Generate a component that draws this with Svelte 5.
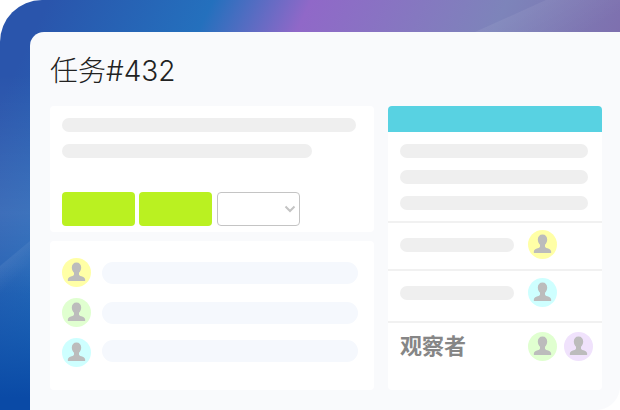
<script>
	const watchers = ['#e0ffd0', '#f0e2fc'];
	const comments = [
		{ tint: '#ffffa6', barTop: 4 },
		{ tint: '#e0ffd0', barTop: 4 },
		{ tint: '#ceffff', barTop: 2 }
	];
</script>

{#snippet avatar(tint)}
	<svg class="avatar" viewBox="0 0 29 29" aria-hidden="true">
		<circle cx="14.5" cy="14.5" r="14.5" fill={tint} />
		<path
			d="M14.5 4.500c-2.900 0-4.700 2-4.700 5 0 2.200 1 4 2.200 5.200v1.800c0 .9-.9 1.300-2.300 1.800-2.200.8-3.800 1.600-3.900 3.400 0 .8.200 1.300.2 1.300h17s.2-.5.200-1.300c-.1-1.800-1.700-2.600-3.900-3.400-1.400-.5-2.300-.9-2.300-1.800v-1.800c1.200-1.200 2.200-3 2.200-5.200 0-3-1.800-5-4.700-5z"
			fill="#bcbcbc"
		/>
	</svg>
{/snippet}

<div class="hero">
	<svg class="sheen" viewBox="0 0 620 410" aria-hidden="true">
		<defs>
			<linearGradient id="fade-left" x1="0" y1="0" x2="0.3" y2="1">
				<stop offset="0" stop-color="#fff" stop-opacity="0.12" />
				<stop offset="0.5" stop-color="#fff" stop-opacity="0" />
			</linearGradient>
			<linearGradient id="fade-right" x1="0" y1="0" x2="1" y2="0.4">
				<stop offset="0" stop-color="#fff" stop-opacity="0.1" />
				<stop offset="1" stop-color="#fff" stop-opacity="0" />
			</linearGradient>
		</defs>
		<path d="M0 266 L30 241 L30 340 L0 340 Z" fill="url(#fade-left)" />
		<path d="M475 32 L546 0 L620 0 L620 32 Z" fill="url(#fade-right)" />
	</svg>
	<main class="card">
		<h1>任务#432</h1>
		<div class="columns">
			<div class="left">
				<section class="panel details">
					<div class="bar long"></div>
					<div class="bar mid"></div>
					<div class="actions">
						<div class="btn"></div>
						<div class="btn"></div>
						<div class="select">
							<svg viewBox="0 0 12 8" aria-hidden="true">
								<path d="M1.500 1.500 6 6l4.500-4.500" fill="none" stroke="#c4c4c4" stroke-width="2" />
							</svg>
						</div>
					</div>
				</section>
				<section class="panel comments">
					{#each comments as c}
						<div class="comment">
							{@render avatar(c.tint)}
							<div class="input" style="margin-top: {c.barTop}px"></div>
						</div>
					{/each}
				</section>
			</div>
			<aside class="panel side">
				<div class="side-head"></div>
				<div class="side-bars">
					<div class="bar"></div>
					<div class="bar"></div>
					<div class="bar"></div>
				</div>
				<div class="row first">
					<div class="bar short"></div>
					{@render avatar('#ffffa6')}
				</div>
				<div class="row second">
					<div class="bar short"></div>
					{@render avatar('#ceffff')}
				</div>
				<div class="watchers">
					<span class="label">观察者</span>
					<div class="faces">
						{#each watchers as tint}
							{@render avatar(tint)}
						{/each}
					</div>
				</div>
			</aside>
		</div>
	</main>
</div>

<style>
	:global(body) {
		background: #fff;
	}

	.hero {
		position: relative;
		width: 620px;
		height: 410px;
		box-sizing: border-box;
		padding: 32px 0 0 30px;
		overflow: hidden;
		border-top-left-radius: 42px;
		background:
			linear-gradient(180deg, rgba(10, 74, 166, 0) 65%, #0a4aa6 97%),
			linear-gradient(180deg, rgba(255, 255, 255, 0) 18%, rgba(255, 255, 255, 0.1) 52%, rgba(255, 255, 255, 0) 72%),
			linear-gradient(116deg, #2a55ac 6%, #2470bd 26%, #9068c8 38%, #7d84ba 62%, #7e6fae 78%);
	}

	.sheen {
		position: absolute;
		inset: 0;
		width: 620px;
		height: 410px;
	}

	.card {
		position: relative;
		height: 378px;
		box-sizing: border-box;
		padding: 20px 18px 20px 20px;
		background: #f9fafc;
		border-top-left-radius: 14px;
	}

	.card::after {
		content: "";
		position: absolute;
		right: 0;
		bottom: 0;
		width: 24px;
		height: 24px;
		background: radial-gradient(circle at 0 0, transparent 23.500px, #fff 24.500px);
	}

	h1 {
		margin: 0 0 15px;
		height: 39px;
		font: 300 28px/39px Inter, "Noto Sans CJK SC", sans-serif;
		color: #222;
	}

	.columns {
		display: flex;
		gap: 14px;
	}

	.left {
		display: flex;
		flex-direction: column;
		gap: 9px;
		width: 324px;
	}

	.panel {
		background: #fff;
		border-radius: 4px;
	}

	.details {
		height: 126px;
		box-sizing: border-box;
		padding: 12px;
	}

	.bar {
		height: 14px;
		border-radius: 7px;
		background: #efefef;
	}

	.long {
		width: 294px;
	}

	.mid {
		width: 250px;
		margin-top: 12px;
	}

	.actions {
		display: flex;
		gap: 4px;
		margin-top: 34px;
	}

	.btn {
		width: 73px;
		height: 34px;
		border-radius: 4px;
		background: #baf121;
	}

	.select {
		display: flex;
		align-items: center;
		justify-content: flex-end;
		width: 83px;
		height: 34px;
		box-sizing: border-box;
		margin-left: 1px;
		padding-right: 3px;
		border: 1px solid #c4c4c4;
		border-radius: 4px;
	}

	.select svg {
		width: 12px;
		height: 8px;
	}

	.comments {
		height: 149px;
		box-sizing: border-box;
		padding: 17px 16px 0 12px;
	}

	.comment {
		display: flex;
		gap: 11px;
		height: 40px;
	}

	.comment:last-child {
		height: auto;
	}

	.avatar {
		display: block;
		flex: none;
		width: 29px;
		height: 29px;
	}

	.input {
		flex: 1;
		height: 22px;
		border-radius: 11px;
		background: #f5f8fd;
	}

	.side {
		width: 214px;
		height: 284px;
		overflow: hidden;
	}

	.side-head {
		height: 26px;
		background: #58d2e2;
	}

	.side-bars {
		display: flex;
		flex-direction: column;
		gap: 12px;
		padding: 12px 14px 11px 12px;
	}

	.row,
	.watchers {
		display: flex;
		gap: 14px;
		border-top: 2px solid #f1f1f1;
		padding-left: 12px;
	}

	.row {
		align-items: center;
		box-sizing: border-box;
	}

	.row.first {
		height: 48px;
		padding-bottom: 3px;
	}

	.row.second {
		height: 52px;
		padding-bottom: 7px;
	}

	.short {
		width: 114px;
	}

	.watchers {
		justify-content: space-between;
		padding: 9px 9px 0 12px;
	}

	.label {
		margin-top: -2px;
		font: 700 22px/29px "Noto Sans CJK SC", sans-serif;
		color: #868686;
	}

	.faces {
		display: flex;
		gap: 7px;
	}
</style>
